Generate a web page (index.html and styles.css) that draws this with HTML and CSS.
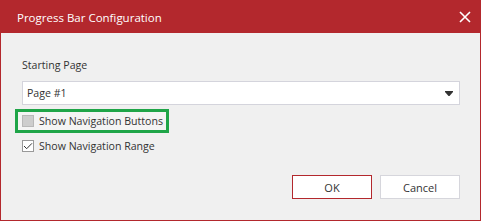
FILE: index.html
```html
<!DOCTYPE html>
<html lang="en">

<head>
    <meta charset="UTF-8">
    <title>Progress Bar Configuration</title>
    <link rel="stylesheet" href="styles.css">
</head>

<body>
    <div class="dialog">
        <div class="dialog-header">
            <span class="dialog-title">Progress Bar Configuration</span>
            <span class="close-btn">
                <svg width="12" height="12" viewBox="0 0 12 12">
                    <path d="M1 1 L11 11 M11 1 L1 11" stroke="#fff" stroke-width="1.6" fill="none" />
                </svg>
            </span>
        </div>
        <div class="dialog-body">
            <div class="field-label">Starting Page</div>
            <div class="select">
                <span>Page #1</span>
                <svg width="8" height="5" viewBox="0 0 8 5">
                    <path d="M0 0 H8 V1 L4.5 5 H3.5 L0 1 Z" fill="#333" />
                </svg>
            </div>
            <div class="highlight">
                <label class="check">
                    <span class="box box-disabled"></span>
                    Show Navigation Buttons
                </label>
            </div>
            <label class="check check-range">
                <span class="box">
                    <svg width="12" height="12" viewBox="0 0 12 12">
                        <polyline points="2,6 4.7,8.7 10,3.3" stroke="#333" stroke-width="1" fill="none" />
                    </svg>
                </span>
                Show Navigation Range
            </label>
            <div class="dialog-footer">
                <button class="btn btn-primary">OK</button>
                <button class="btn">Cancel</button>
            </div>
        </div>
    </div>
</body>

</html>
```

FILE: styles.css
```css
* {
    box-sizing: border-box;
    margin: 0;
    padding: 0;
}

body {
    background: #fff;
    font-family: "Open Sans", "Noto Sans", sans-serif;
    font-size: 10.6px;
    color: #333;
}

.dialog {
    width: 481px;
    height: 221px;
    border: 1px solid #b3282d;
    background-color: #f0f0f0;
}

.dialog-header {
    height: 32px;
    background-color: #b3282d;
    display: flex;
    justify-content: space-between;
    align-items: center;
    padding: 0 9px 0 16px;
}

.dialog-title {
    color: #fff;
    font-size: 11.5px;
}

.close-btn {
    display: flex;
    width: 12px;
    height: 12px;
}

.dialog-body {
    padding: 24px 20px 0 21px;
}

.field-label {
    height: 16px;
    line-height: 16px;
    margin-bottom: 8px;
}

.select {
    height: 24px;
    background: #fff;
    border: 1px solid #d4d4dc;
    display: flex;
    justify-content: space-between;
    align-items: center;
    padding: 0 6px 0 4px;
}

.highlight {
    width: fit-content;
    height: 24px;
    margin: 4px 0 0 -7px;
    border: 3px solid #1fa548;
    background: #f4f4f4;
    padding: 0 3px 0 4px;
    display: flex;
    align-items: center;
}

.check {
    display: flex;
    align-items: center;
    gap: 5px;
    height: 18px;
    line-height: 18px;
    white-space: nowrap;
}

.check-range {
    height: 20px;
    margin-top: 3px;
}

.box {
    width: 12px;
    height: 12px;
    border: 1px solid #999;
    background: #fff;
    display: flex;
    align-items: center;
    justify-content: center;
}

.box svg {
    flex-shrink: 0;
}

.box-disabled {
    background: #cdcdcd;
    border-color: #b8b8b8;
}

.dialog-footer {
    display: flex;
    justify-content: flex-end;
    gap: 8px;
    margin-top: 19px;
}

.btn {
    width: 80px;
    height: 24px;
    background: #fff;
    border: 1px solid #d6d6dc;
    font-family: inherit;
    font-size: 11px;
    color: #333;
}

.btn-primary {
    border-color: #b3282d;
}
```
